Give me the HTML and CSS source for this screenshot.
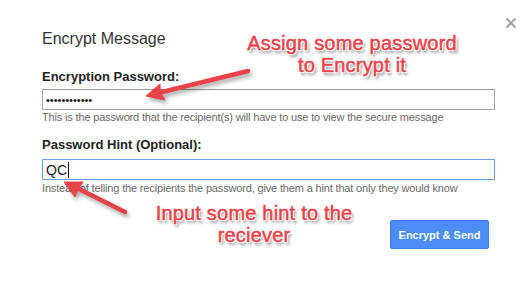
FILE: index.html
```html
<!DOCTYPE html>
<html lang="en">
<head>
  <meta charset="UTF-8" />
  <title>Encrypt Message</title>
  <link rel="stylesheet" href="styles.css">
</head>
<body>

<div class="dialog">
  <button class="close" type="button" aria-label="Close">
    <svg width="12" height="12" viewBox="0 0 12 12">
      <path d="M1.5 1.5 L10.5 10.5 M10.5 1.5 L1.5 10.5" stroke="#a3a3a3" stroke-width="2" fill="none" />
    </svg>
  </button>

  <h1 class="title">Encrypt Message</h1>

  <div class="field field-password">
    <label for="password">Encryption Password:</label>
    <input type="password" id="password" class="input" value="qwertyuiop12" readonly />
    <p class="help">This is the password that the recipient(s) will have to use to view the secure message</p>
  </div>

  <div class="field field-hint">
    <label for="hint">Password Hint (Optional):</label>
    <div id="hint" class="input input-focus">QC<span class="caret"></span></div>
    <p class="help">Instead of telling the recipients the password, give them a hint that only they would know</p>
  </div>

  <div class="actions">
    <button class="send" type="button">Encrypt &amp; Send</button>
  </div>

  <div class="note note-password">Assign some password<br>to Encrypt it</div>
  <div class="note note-hint">Input some hint to the<br>reciever</div>

  <svg class="arrows" width="532" height="282" viewBox="0 0 532 282">
    <g fill="#e9434a" stroke="#e9434a" stroke-linejoin="round">
      <line x1="248" y1="71" x2="162" y2="92" stroke-width="4.5" stroke-linecap="round" />
      <polygon points="146,96 165,100 160,92 160,84" stroke-width="1" />
      <line x1="125" y1="212" x2="79" y2="189" stroke-width="4.5" stroke-linecap="round" />
      <polygon points="64,182 83,182 78,189 75,197" stroke-width="1" />
    </g>
  </svg>
</div>

</body>
</html>
```

FILE: styles.css
```css
body {
  margin: 0;
  background: #fff;
  font-family: "Liberation Sans", Arial, sans-serif;
}
.dialog {
  position: relative;
  width: 532px;
  height: 282px;
  box-sizing: border-box;
  padding: 29px 37px 0 42px;
  overflow: hidden;
}
.close {
  position: absolute;
  top: 17px;
  right: 15px;
  width: 12px;
  height: 12px;
  padding: 0;
  border: none;
  background: none;
  display: flex;
}
.title {
  margin: 0;
  font-size: 16px;
  font-weight: normal;
  line-height: 20px;
  color: #333;
}
.field label {
  display: block;
  font-size: 13px;
  font-weight: bold;
  line-height: 16px;
  color: #222;
}
.field-password {
  margin-top: 20px;
}
.field-hint {
  margin-top: 13px;
}
.input {
  display: flex;
  align-items: center;
  width: 453px;
  height: 21px;
  box-sizing: border-box;
  margin: 4px 0 0;
  padding: 0 3px;
  border: 1px solid #a9a9a9;
  border-top-color: #999;
  border-radius: 0;
  font-family: inherit;
  font-size: 11px;
  color: #111;
  outline: none;
}
.input-focus {
  margin-top: 6px;
  border-color: #6e9de3;
  font-size: 14px;
  color: #222;
}
.caret {
  display: inline-block;
  width: 1px;
  height: 16px;
  margin-left: 1px;
  background: #111;
}
.help {
  margin: 0;
  font-size: 11px;
  line-height: 14px;
  letter-spacing: -0.16px;
  color: #6a6a6a;
}
.field-hint .help {
  margin-top: 1px;
}
.actions {
  display: flex;
  justify-content: flex-end;
  margin-top: 25px;
  padding-right: 6px;
}
.send {
  height: 29px;
  width: 99px;
  padding: 0;
  border: 1px solid #3d7fe9;
  border-radius: 2px;
  background: #4b8cf5;
  color: #fff;
  font-family: inherit;
  font-size: 11px;
  font-weight: bold;
}
.note {
  position: absolute;
  width: 230px;
  font-size: 20px;
  line-height: 22px;
  letter-spacing: 0.2px;
  text-align: center;
  color: #e8434b;
  -webkit-text-stroke: 0.5px #e8434b;
  text-shadow: -1px -1px 0 #fff, 1px -1px 0 #fff, -1px 1px 0 #fff, 1px 1px 0 #fff, 2px 3px 3px rgba(0, 0, 0, 0.5);
}
.note-password {
  top: 32px;
  left: 237px;
}
.note-hint {
  top: 202px;
  left: 139px;
}
.arrows {
  position: absolute;
  top: 0;
  left: 0;
  pointer-events: none;
  filter: drop-shadow(2px 3px 2px rgba(0, 0, 0, 0.35));
}
```
